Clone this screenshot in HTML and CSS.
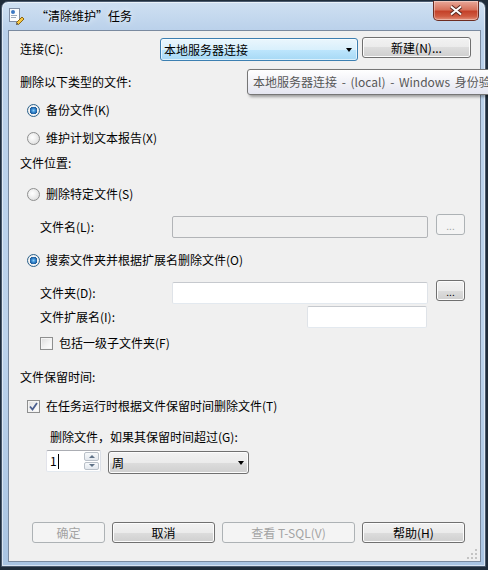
FILE: index.html
```html
<!DOCTYPE html>
<html lang="zh-CN">
<head>
    <meta charset="UTF-8">
    <title>“清除维护”任务</title>
    <link rel="stylesheet" href="styles.css">
</head>
<body>
    <div class="window">
        <div class="titlebar">
            <svg class="app-icon" width="17" height="17" viewBox="0 0 17 17">
                <rect x="1.5" y="0.5" width="10" height="13" fill="#fbfcfe" stroke="#7f8da3"/>
                <circle cx="5" cy="4" r="2" fill="#3b78c4"/>
                <rect x="3" y="7" width="6" height="1" fill="#9aa8bb"/>
                <rect x="3" y="9" width="5" height="1" fill="#9aa8bb"/>
                <path d="M8.5 14.5 L14 9 L16 11 L10.5 16.5 Z" fill="#f4c542" stroke="#8a6512"/>
                <path d="M8.5 14.5 L10.5 16.5 L8 17 Z" fill="#555"/>
            </svg>
            <span class="title">“清除维护”任务</span>
            <button class="close">
                <svg width="14" height="11" viewBox="0 0 14 11">
                    <path d="M2 1.5 L12 9.5 M12 1.5 L2 9.5" stroke="#5b2a22" stroke-width="4"/>
                    <path d="M2 1.5 L12 9.5 M12 1.5 L2 9.5" stroke="#fff" stroke-width="2"/>
                </svg>
            </button>
        </div>

        <div class="client">
            <div class="row row-conn">
                <span class="label-conn">连接(C):</span>
                <div class="combo combo-hot"><span>本地服务器连接</span><i class="arrow"></i></div>
                <button class="btn btn-new">新建(N)...</button>
            </div>

            <div class="row mt-11">删除以下类型的文件:</div>
            <div class="row mt-8 indent-radio"><span class="radio on"></span>备份文件(K)</div>
            <div class="row mt-8 indent-radio"><span class="radio"></span>维护计划文本报告(X)</div>

            <div class="row mt-5">文件位置:</div>
            <div class="row mt-11 indent-radio"><span class="radio"></span>删除特定文件(S)</div>
            <div class="row row-field mt-10 indent-field">
                <span class="field-label">文件名(L):</span>
                <div class="field field-path disabled"></div>
                <button class="btn btn-dots" disabled>...</button>
            </div>
            <div class="row mt-12 indent-radio"><span class="radio on"></span>搜索文件夹并根据扩展名删除文件(O)</div>
            <div class="row row-field mt-10 indent-field">
                <span class="field-label">文件夹(D):</span>
                <div class="field field-path"></div>
                <button class="btn btn-dots">...</button>
            </div>
            <div class="row row-ext mt-2 indent-field">
                <span class="field-label label-ext">文件扩展名(I):</span>
                <div class="field field-ext"></div>
            </div>
            <div class="row mt-5 indent-field"><span class="check"></span>包括一级子文件夹(F)</div>

            <div class="row mt-14">文件保留时间:</div>
            <div class="row mt-9 indent-radio">
                <span class="check on">
                    <svg width="11" height="11" viewBox="0 0 11 11"><path d="M2 5.5 L4.5 8.5 L9 2" fill="none" stroke="#4b5f8f" stroke-width="1.8"/></svg>
                </span>在任务运行时根据文件保留时间删除文件(T)
            </div>
            <div class="row mt-11 indent-age">删除文件，如果其保留时间超过(G):</div>
            <div class="row row-age mt-3">
                <div class="spin">
                    <div class="spin-text">1<i class="caret"></i></div>
                    <div class="spin-btns">
                        <span class="spin-btn"><i class="up"></i></span>
                        <span class="spin-btn"><i class="down"></i></span>
                    </div>
                </div>
                <div class="combo combo-unit"><span>周</span><i class="arrow"></i></div>
            </div>

            <div class="actions">
                <button class="btn btn-ok" disabled>确定</button>
                <button class="btn btn-cancel">取消</button>
                <button class="btn btn-sql" disabled>查看 T-SQL(V)</button>
                <button class="btn btn-help">帮助(H)</button>
            </div>

            <svg class="grip" width="10" height="10" viewBox="0 0 10 10">
                <rect x="8" y="0" width="2" height="2" fill="#c4c4c4"/>
                <rect x="4" y="4" width="2" height="2" fill="#c4c4c4"/>
                <rect x="8" y="4" width="2" height="2" fill="#c4c4c4"/>
                <rect x="0" y="8" width="2" height="2" fill="#c4c4c4"/>
                <rect x="4" y="8" width="2" height="2" fill="#c4c4c4"/>
                <rect x="8" y="8" width="2" height="2" fill="#c4c4c4"/>
            </svg>
        </div>
    </div>

    <div class="tooltip">本地服务器连接 - (local) - Windows 身份验</div>
</body>
</html>
```

FILE: styles.css
```css
* {
    box-sizing: border-box;
}
html, body {
    margin: 0;
}
body {
    position: relative;
    width: 488px;
    height: 570px;
    overflow: hidden;
    background: #1f2c3a;
    font-family: "Microsoft YaHei", "Noto Sans CJK SC", sans-serif;
    font-size: 12px;
    color: #000;
}

/* window frame */
.window {
    margin: 1px 0 0 1px;
    width: 485px;
    height: 566px;
    border: 1px solid #4a5a6e;
    border-radius: 7px 7px 0 0;
    background: linear-gradient(180deg, #cfe0f2 0, #b9d0ea 30px, #bcd3ec 60%, #a9c4e2 100%);
    box-shadow: inset 0 0 0 1px rgba(255, 255, 255, 0.55);
    padding: 0 4px 4px 6px;
    display: flex;
    flex-direction: column;
}
.titlebar {
    height: 28px;
    display: flex;
    align-items: center;
    flex-shrink: 0;
}
.app-icon {
    display: block;
}
.title {
    margin-left: 11px;
    line-height: 16px;
    color: #000;
    text-shadow: 0 0 6px rgba(255, 255, 255, 0.9);
}
.close {
    align-self: flex-start;
    margin: -1px 2px 0 auto;
    width: 46px;
    height: 20px;
    padding: 0;
    border: 1px solid #6d2d22;
    border-top: none;
    border-radius: 0 0 5px 5px;
    background: linear-gradient(180deg, #e9a99a 0, #d7735d 45%, #c5422a 55%, #cf5a40 80%, #e3917c 100%);
    box-shadow: inset 0 0 0 1px rgba(255, 255, 255, 0.35);
    display: flex;
    align-items: center;
    justify-content: center;
}
.close svg {
    display: block;
}

/* dialog client area */
.client {
    position: relative;
    flex: 1;
    border: 1px solid #7a8a9f;
    background: #f0f0f0;
    padding: 6px 0 18px 11px;
    display: flex;
    flex-direction: column;
}
.row {
    display: flex;
    align-items: center;
    height: 20px;
    line-height: 20px;
    white-space: nowrap;
}
.mt-2 { margin-top: 2px; }
.mt-3 { margin-top: 3px; }
.mt-5 { margin-top: 5px; }
.mt-8 { margin-top: 8px; }
.mt-9 { margin-top: 9px; }
.mt-10 { margin-top: 10px; }
.mt-11 { margin-top: 11px; }
.mt-12 { margin-top: 12px; }
.mt-14 { margin-top: 14px; }
.indent-radio {
    padding-left: 7px;
}
.indent-field {
    padding-left: 20px;
}
.indent-age {
    padding-left: 30px;
}

.row-conn {
    height: 24px;
    align-items: flex-start;
}
.label-conn {
    width: 140px;
    line-height: 24px;
}
.row-field {
    height: 24px;
    align-items: flex-start;
}
.field-label {
    width: 132px;
    margin-top: 2px;
    line-height: 22px;
}
.row-ext {
    height: 22px;
    align-items: flex-start;
}
.label-ext {
    width: 267px;
    margin-top: 0;
}
.row-age {
    height: 24px;
    align-items: flex-start;
    padding-left: 26px;
}

/* controls */
.btn {
    height: 21px;
    padding: 0;
    border: 1px solid #707070;
    border-radius: 3px;
    background: linear-gradient(180deg, #f2f2f2 0, #ebebeb 50%, #dddddd 50%, #cfcfcf 100%);
    box-shadow: inset 0 0 0 1px #fcfcfc;
    font-family: inherit;
    font-size: 12px;
    line-height: 18px;
    color: #000;
}
.btn:disabled {
    border-color: #adb2b5;
    background: #f4f4f4;
    box-shadow: none;
    color: #a3a3a3;
}
.btn-new {
    width: 109px;
    margin-left: 4px;
}
.btn-dots {
    width: 29px;
    margin-left: 8px;
    font-size: 10px;
    line-height: 14px;
    padding-top: 3px;
}

.combo {
    display: flex;
    align-items: center;
    border-radius: 3px;
    padding-left: 3px;
}
.combo-hot {
    width: 198px;
    height: 23px;
    margin-top: 1px;
    border: 1px solid #3c7fb1;
    background: linear-gradient(180deg, #eaf6fd 0, #d9f0fc 50%, #bee6fd 50%, #a7d9f5 100%);
    box-shadow: inset 0 0 0 1px rgba(255, 255, 255, 0.6);
}
.combo-hot .arrow {
    margin-right: 5px;
}
.combo-unit {
    width: 141px;
    height: 23px;
    margin-left: 7px;
    margin-top: 1px;
    border: 1px solid #707070;
    background: linear-gradient(180deg, #f2f2f2 0, #ebebeb 50%, #dddddd 50%, #cfcfcf 100%);
    box-shadow: inset 0 0 0 1px #fcfcfc;
}
.arrow {
    margin-left: auto;
    margin-right: 4px;
    width: 0;
    height: 0;
    border-left: 3.5px solid transparent;
    border-right: 3.5px solid transparent;
    border-top: 4px solid #000;
}

.field {
    height: 22px;
    border: 1px solid;
    border-color: #c6c9ce #dfe3e8 #e3e9ef #dfe3e8;
    border-radius: 2px;
    background: #fff;
}
.field-path {
    width: 256px;
    margin-top: 2px;
}
.field-path.disabled {
    background: #f0f0f0;
    border-color: #b2b4b7;
}
.field-ext {
    width: 120px;
}

.radio {
    width: 13px;
    height: 13px;
    margin-right: 6px;
    border-radius: 50%;
    border: 1px solid #8e8f8f;
    background: radial-gradient(circle at 40% 40%, #ffffff 0, #f2f2f2 35%, #d4d4d4 100%);
    flex-shrink: 0;
}
.radio.on {
    border-color: #2c628b;
    background: radial-gradient(circle at 50% 50%, #8ed0f7 0, #3a8cd4 1.8px, #1c5a98 3.6px, #f4f4f4 4px, #e3e3e3 100%);
}
.check {
    width: 13px;
    height: 13px;
    margin-right: 6px;
    border: 1px solid #8e8f8f;
    background: linear-gradient(135deg, #dcdcdc 0, #f3f3f3 55%, #ffffff 100%);
    box-shadow: inset 0 0 0 1px #f4f4f4;
    display: flex;
    align-items: center;
    justify-content: center;
    flex-shrink: 0;
}
.check svg {
    display: block;
}

.spin {
    width: 55px;
    height: 22px;
    display: flex;
    border: 1px solid;
    border-color: #abadb3 #dbdfe6 #e3e9ef #e2e3ea;
    border-radius: 2px;
    background: #fff;
}
.spin-text {
    flex: 1;
    display: flex;
    align-items: center;
    padding-left: 3px;
    line-height: 20px;
}
.caret {
    width: 1px;
    height: 15px;
    margin-left: 1px;
    background: #000;
}
.spin-btns {
    width: 16px;
    display: flex;
    flex-direction: column;
    padding: 1px 1px 1px 0;
    gap: 1px;
}
.spin-btn {
    flex: 1;
    border: 1px solid #b9c0c8;
    border-radius: 2px;
    background: linear-gradient(180deg, #f7f9fb, #e3e8ee);
    display: flex;
    align-items: center;
    justify-content: center;
}
.up, .down {
    width: 0;
    height: 0;
    border-left: 3px solid transparent;
    border-right: 3px solid transparent;
}
.up {
    border-bottom: 3px solid #5f7287;
}
.down {
    border-top: 3px solid #5f7287;
}

.actions {
    margin-top: auto;
    padding-left: 12px;
    display: flex;
    gap: 7px;
}
.btn-ok {
    width: 73px;
}
.btn-cancel,
.btn-help {
    width: 103px;
}
.btn-sql {
    width: 133px;
}
.grip {
    position: absolute;
    right: 3px;
    bottom: 2px;
}

/* hover tooltip over the connection combo */
.tooltip {
    position: absolute;
    left: 247px;
    top: 69px;
    height: 26px;
    padding: 0 6px 0 5px;
    border: 1px solid #767676;
    border-radius: 3px;
    background: linear-gradient(180deg, #ffffff 0, #e4e5f0 100%);
    box-shadow: 2px 2px 3px rgba(0, 0, 0, 0.35);
    color: #575757;
    line-height: 24px;
    white-space: nowrap;
    word-spacing: 2px;
}
```
